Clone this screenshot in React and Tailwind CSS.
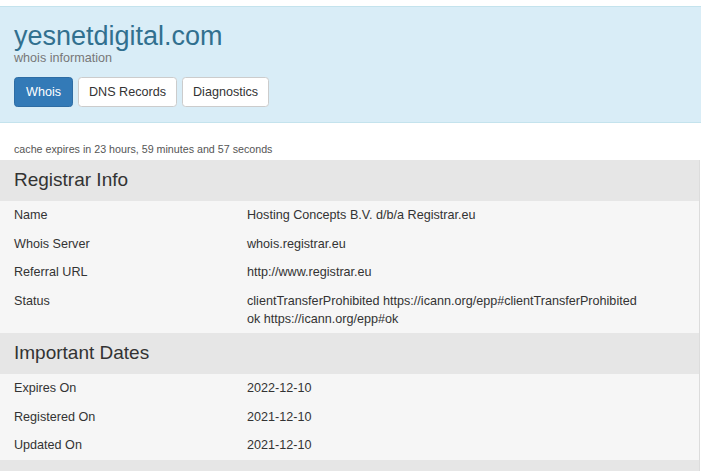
import React from 'react';

const registrar = [
  { label: 'Name', value: ['Hosting Concepts B.V. d/b/a Registrar.eu'] },
  { label: 'Whois Server', value: ['whois.registrar.eu'] },
  { label: 'Referral URL', value: ['http://www.registrar.eu'] },
  {
    label: 'Status',
    value: [
      'clientTransferProhibited https://icann.org/epp#clientTransferProhibited',
      'ok https://icann.org/epp#ok',
    ],
  },
];

const dates = [
  { label: 'Expires On', value: ['2022-12-10'] },
  { label: 'Registered On', value: ['2021-12-10'] },
  { label: 'Updated On', value: ['2021-12-10'] },
];

const Section = ({ title, rows }) => (
  <div>
    <div className="h-[41px] flex items-center px-[14px] bg-[#e6e6e6] text-[19px] text-[#333]">
      {title}
    </div>
    <div className="bg-[#f6f6f6]">
      {rows.map((row) => (
        <div key={row.label} className="flex py-[5.25px] leading-[18px] text-[12.6px] text-[#333]">
          <div className="w-[247px] pl-[14px] shrink-0">{row.label}</div>
          <div>
            {row.value.map((v) => (
              <div key={v}>{v}</div>
            ))}
          </div>
        </div>
      ))}
    </div>
  </div>
);

export default function App() {
  return (
    <div className="w-[701px] h-[471px] overflow-hidden bg-white pt-[6px] font-['Liberation_Sans',Arial,sans-serif]">
      <div className="bg-[#d9edf7] border-y border-[#c4e3ed] h-[117px] px-[14px] pt-[14px]">
        <h1 className="text-[27px] leading-[30px] text-[#31708f]">yesnetdigital.com</h1>
        <p className="text-[12.6px] leading-[15px] text-[#777]">whois information</p>
        <div className="flex gap-[5px] mt-[11px]">
          <button className="h-[30px] px-[11px] rounded-[3.6px] bg-[#337ab7] border border-[#2e6da4] text-white text-[12.6px]">
            Whois
          </button>
          <button className="h-[30px] px-[10px] rounded-[3.6px] bg-white border border-[#ccc] text-[#333] text-[12.6px]">
            DNS Records
          </button>
          <button className="h-[30px] px-[10px] rounded-[3.6px] bg-white border border-[#ccc] text-[#333] text-[12.6px]">
            Diagnostics
          </button>
        </div>
      </div>
      <div className="h-[37px] flex items-end pb-[3px] px-[14px] text-[10.7px] text-[#555]">
        cache expires in 23 hours, 59 minutes and 57 seconds
      </div>
      <div className="w-[700px] border-r border-[#dcdcdc]">
        <Section title="Registrar Info" rows={registrar} />
        <Section title="Important Dates" rows={dates} />
        <div className="h-[41px] bg-[#e6e6e6]" />
      </div>
    </div>
  );
}
